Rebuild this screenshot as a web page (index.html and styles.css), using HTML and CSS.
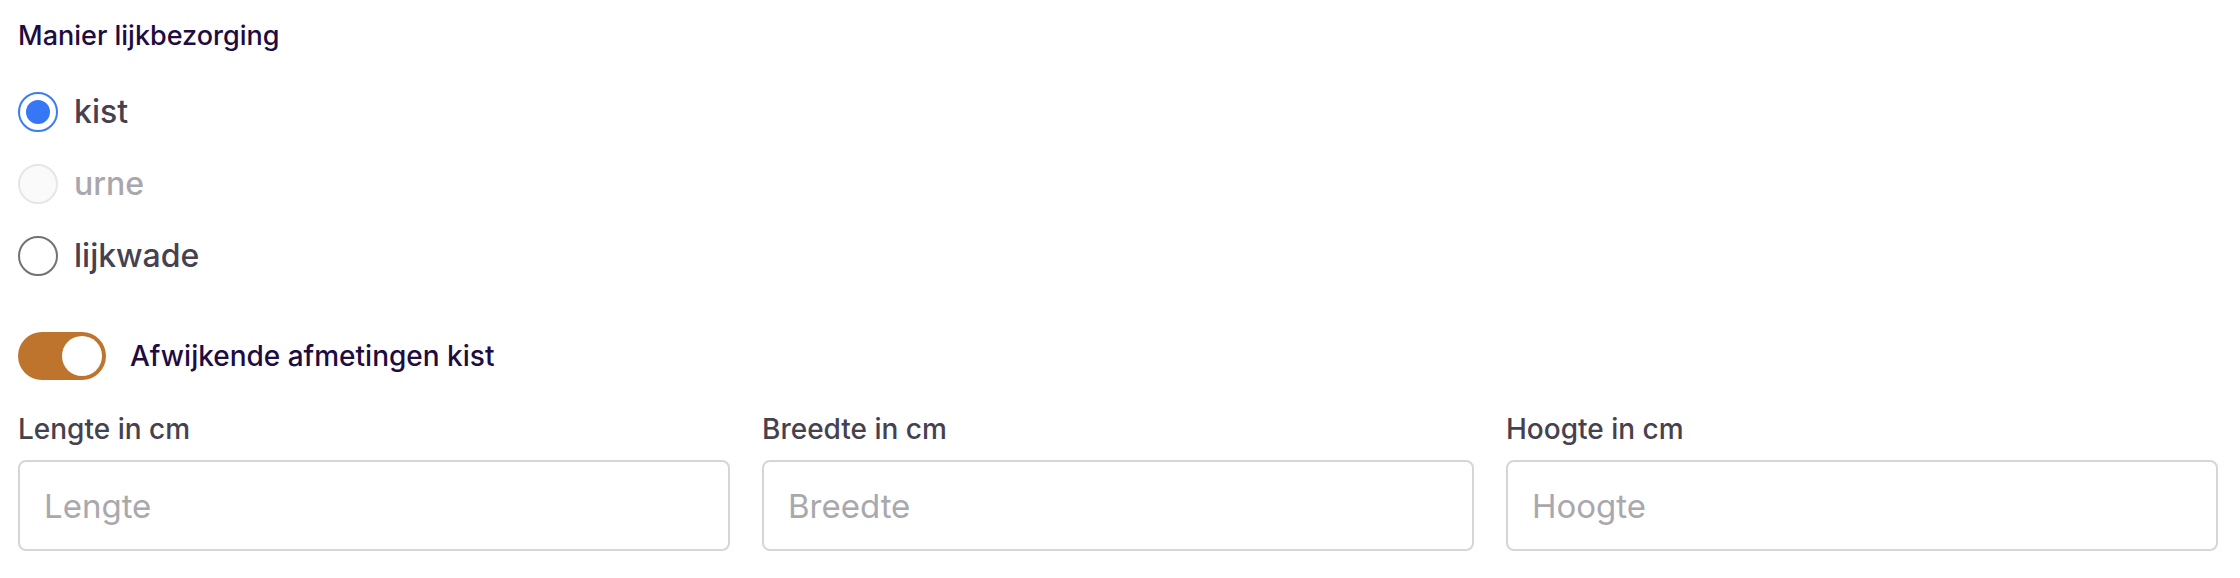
FILE: index.html
```html
<!DOCTYPE html>
<html lang="nl">
<head>
<meta charset="utf-8">
<title>Manier lijkbezorging</title>
<link rel="stylesheet" href="styles.css">
</head>
<body>
<form class="form">
  <div class="heading">Manier lijkbezorging</div>
  <div class="radios">
    <label class="radio-row">
      <input class="radio" type="radio" name="wijze" checked>
      <span class="radio-label">kist</span>
    </label>
    <label class="radio-row is-disabled">
      <input class="radio" type="radio" name="wijze" disabled>
      <span class="radio-label">urne</span>
    </label>
    <label class="radio-row">
      <input class="radio" type="radio" name="wijze">
      <span class="radio-label">lijkwade</span>
    </label>
  </div>
  <div class="toggle-row">
    <span class="toggle"><span class="knob"></span></span>
    <span class="toggle-label">Afwijkende afmetingen kist</span>
  </div>
  <div class="fields">
    <label class="field">
      <span class="field-label">Lengte in cm</span>
      <input class="field-input" type="text" placeholder="Lengte">
    </label>
    <label class="field">
      <span class="field-label">Breedte in cm</span>
      <input class="field-input" type="text" placeholder="Breedte">
    </label>
    <label class="field">
      <span class="field-label">Hoogte in cm</span>
      <input class="field-input" type="text" placeholder="Hoogte">
    </label>
  </div>
</form>
</body>
</html>
```
FILE: styles.css
```css
* { box-sizing: border-box; }

html, body {
  margin: 0;
  padding: 0;
  background: #ffffff;
}

body {
  font-family: Inter, "Noto Sans", "Liberation Sans", sans-serif;
  color: #46414f;
}

.form {
  display: flex;
  flex-direction: column;
  width: 2200px;
  margin-left: 18px;
  padding-top: 18px;
}

.heading {
  font-size: 27px;
  line-height: 36px;
  color: #200c3f;
  font-weight: 500;
}

.radios {
  display: flex;
  flex-direction: column;
  gap: 32px;
  margin-top: 38px;
}

.radio-row {
  display: flex;
  align-items: center;
  gap: 16px;
  height: 40px;
}

.radio {
  appearance: none;
  -webkit-appearance: none;
  margin: 0;
  width: 40px;
  height: 40px;
  border-radius: 50%;
  border: 2px solid #727272;
  background: #ffffff;
  display: flex;
  align-items: center;
  justify-content: center;
  flex: none;
}

.radio:checked {
  border-color: #3b7cf6;
}

.radio:checked::after {
  content: "";
  width: 24px;
  height: 24px;
  border-radius: 50%;
  background: #3577f5;
}

.radio:disabled {
  border-color: #e6e6e6;
  background: #fafafa;
}

.radio-label {
  font-size: 32px;
  line-height: 40px;
  color: #46414f;
  font-weight: 500;
}

.is-disabled .radio-label {
  color: #a9a7ad;
}

.toggle-row {
  display: flex;
  align-items: center;
  gap: 24px;
  margin-top: 56px;
}

.toggle {
  display: flex;
  justify-content: flex-end;
  align-items: center;
  width: 88px;
  height: 48px;
  padding: 4px;
  border-radius: 24px;
  background: #bf742e;
}

.knob {
  width: 40px;
  height: 40px;
  border-radius: 50%;
  background: #ffffff;
}

.toggle-label {
  font-size: 28px;
  line-height: 48px;
  color: #200c3f;
  font-weight: 500;
}

.fields {
  display: grid;
  grid-template-columns: repeat(3, 1fr);
  gap: 32px;
  margin-top: 29px;
}

.field {
  display: flex;
  flex-direction: column;
  gap: 11px;
}

.field-label {
  font-size: 28px;
  line-height: 40px;
  color: #46414f;
  font-weight: 500;
}

.field-input {
  width: 100%;
  height: 91px;
  margin: 0;
  padding: 0 24px;
  border: 2px solid #d6d5da;
  border-radius: 8px;
  background: #ffffff;
  font-family: Inter, "Noto Sans", "Liberation Sans", sans-serif;
  font-size: 33px;
  color: #46414f;
  outline: none;
}

.field-input::placeholder {
  color: #a9a8ad;
  opacity: 1;
}
```
